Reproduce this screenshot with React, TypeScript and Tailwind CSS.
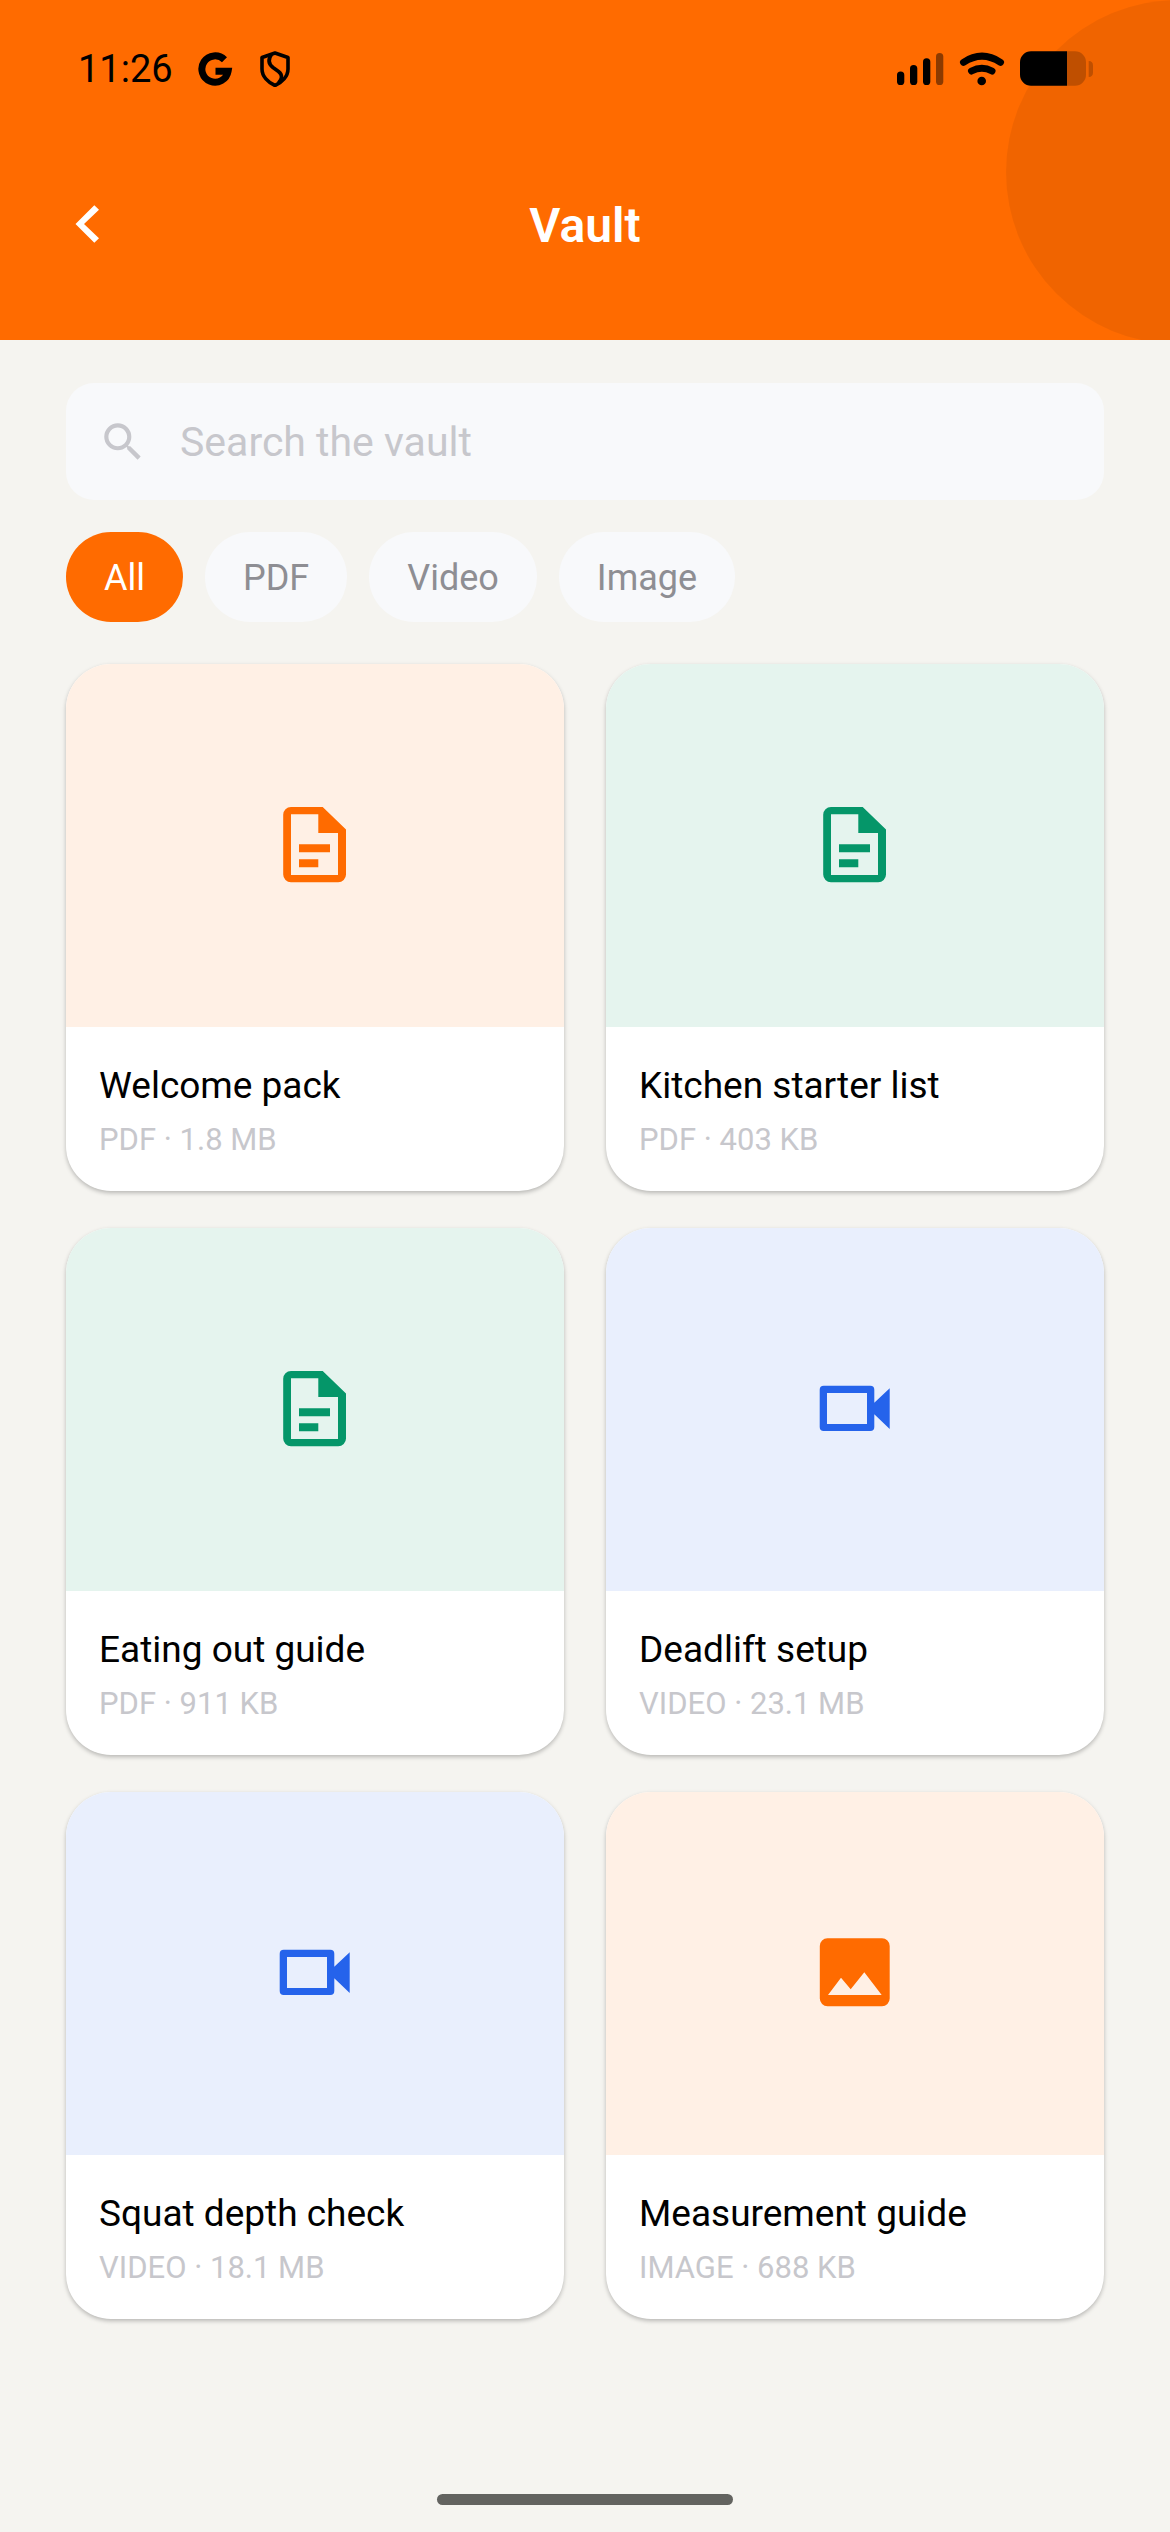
import { useState } from "react";
import { MdSearch } from "react-icons/md";

type Kind = "PDF" | "Video" | "Image";
type Tone = "orange" | "green" | "blue";

type VaultItem = {
  title: string;
  kind: Kind;
  size: string;
  tone: Tone;
};

const items: VaultItem[] = [
  { title: "Welcome pack", kind: "PDF", size: "1.8 MB", tone: "orange" },
  { title: "Kitchen starter list", kind: "PDF", size: "403 KB", tone: "green" },
  { title: "Eating out guide", kind: "PDF", size: "911 KB", tone: "green" },
  { title: "Deadlift setup", kind: "Video", size: "23.1 MB", tone: "blue" },
  { title: "Squat depth check", kind: "Video", size: "18.1 MB", tone: "blue" },
  { title: "Measurement guide", kind: "Image", size: "688 KB", tone: "orange" },
];

const filters = ["All", "PDF", "Video", "Image"] as const;
type Filter = (typeof filters)[number];

const tones: Record<Tone, string> = {
  orange: "bg-[#fff0e5] text-[#ff6b00]",
  green: "bg-[#e5f4ee] text-[#059669]",
  blue: "bg-[#e9effd] text-[#2563eb]",
};

function KindIcon({ kind }: { kind: Kind }) {
  return (
    <svg
      viewBox="0 1 90 90"
      className="size-[90px]"
      fill="currentColor"
      fillRule="evenodd"
      aria-hidden="true"
    >
      {kind === "PDF" && (
        <path d="M21 7H52.7L76 29.5V74.5a7.8 7.8 0 0 1-7.8 7.8H21a7.8 7.8 0 0 1-7.8-7.8V14.8A7.8 7.8 0 0 1 21 7ZM21 14.3V75H68V33H48.3V14.3ZM29 44.3H60V52.3H29ZM29 59.3H48.3V67.3H29Z" />
      )}
      {kind === "Video" && (
        <path d="M13.7 21.7H60.3a4 4 0 0 1 4 4V38.7L79.7 24.3V65L64.3 50.3V63a4 4 0 0 1-4 4H13.7a4 4 0 0 1-4-4V25.7a4 4 0 0 1 4-4ZM17 29V60H57V29Z" />
      )}
      {kind === "Image" && (
        <path d="M17.5 10.3H72a7.7 7.7 0 0 1 7.7 7.7V70.6a7.7 7.7 0 0 1-7.7 7.7H17.5a7.7 7.7 0 0 1-7.7-7.7V18a7.7 7.7 0 0 1 7.7-7.7ZM18 67H71.7L54.3 44.3L40.7 61.3L31 49.7Z" />
      )}
    </svg>
  );
}

function StatusBar() {
  return (
    <div className="flex h-[138px] items-center justify-between pl-[78px] pr-[76px] text-black">
      <div className="flex items-center">
        <span className="text-[38px] leading-none">11:26</span>
        <svg viewBox="0 0 36 36" className="ml-6 size-9" aria-hidden="true">
          <path
            d="M27.5 8.8A13.2 13.2 0 1 0 31.1 20.2H18.5"
            fill="none"
            stroke="currentColor"
            strokeWidth="7"
          />
        </svg>
        <svg
          viewBox="0 0 30 36"
          className="ml-[27px] h-9 w-[30px]"
          fill="none"
          stroke="currentColor"
          strokeWidth="3.6"
          strokeLinejoin="round"
          aria-hidden="true"
        >
          <path d="M15 2L28 6.5V18C28 25.5 22 31.5 15 34.5C8 31.5 2 25.5 2 18V6.5Z" />
          <path d="M11.5 3.5C7.5 9 8.5 13 13 16.5L18.5 20.5C23 24 22 28 18.5 32" />
        </svg>
      </div>
      <svg viewBox="0 0 198 38" className="h-[38px] w-[198px]" aria-hidden="true">
        <rect x="1" y="21.5" width="7.3" height="13.5" rx="3.6" />
        <rect x="14" y="15" width="7.3" height="20" rx="3.6" />
        <rect x="27" y="8.3" width="7.3" height="26.7" rx="3.6" />
        <rect x="40" y="3" width="7.3" height="32" rx="3.6" opacity="0.45" />
        <g fill="none" stroke="currentColor" strokeWidth="7" strokeLinecap="round">
          <path d="M67.5 12.3Q86 0 104.5 12.3" />
          <path d="M75.5 21Q86 15.5 96 21" />
        </g>
        <circle cx="85.7" cy="31" r="4.3" />
        <path d="M171 1.3H135A11 11 0 0 0 124 12.3V24.7A11 11 0 0 0 135 35.7H171Z" />
        <g opacity="0.2">
          <path d="M171 1.3H179A11 11 0 0 1 190 12.3V24.7A11 11 0 0 1 179 35.7H171Z" />
          <path d="M192.7 11A4.5 4.5 0 0 1 197 15.5V22.5A4.5 4.5 0 0 1 192.7 27Z" />
        </g>
      </svg>
    </div>
  );
}

function Header() {
  return (
    <header className="relative h-[340px] overflow-hidden bg-[#ff6b00]">
      <div className="absolute -right-[180px] top-0 size-[344px] rounded-full bg-black/6" />
      <div className="relative">
        <StatusBar />
        <div className="grid grid-cols-[1fr_auto_1fr] items-center px-[66px] pt-[56px] text-white">
          <button type="button" aria-label="Back" className="size-16 justify-self-start">
            <svg viewBox="0 2 64 64" className="size-16" fill="currentColor" aria-hidden="true">
              <path d="M28.3 13.2L33 17.8L18 32L33 46.2L28.3 50.7L9.5 32Z" />
            </svg>
          </button>
          <h1 className="text-[48px] font-semibold leading-[64px]">Vault</h1>
        </div>
      </div>
    </header>
  );
}

function VaultCard({ item }: { item: VaultItem }) {
  return (
    <li className="overflow-hidden rounded-[45px] bg-white shadow-[0_2px_4px_rgba(0,0,0,0.25)]">
      <div className={`flex h-[363px] items-center justify-center ${tones[item.tone]}`}>
        <KindIcon kind={item.kind} />
      </div>
      <div className="px-[33px] pb-[31px] pt-[35px]">
        <h2 className="truncate text-[37px] leading-[48px] text-black">{item.title}</h2>
        <p className="mt-[10px] text-[31px] leading-10 text-[#c7c7cc]">
          {item.kind.toUpperCase()} · {item.size}
        </p>
      </div>
    </li>
  );
}

export default function App() {
  const [query, setQuery] = useState("");
  const [filter, setFilter] = useState<Filter>("All");

  const visible = items.filter(
    (item) =>
      (filter === "All" || item.kind === filter) &&
      item.title.toLowerCase().includes(query.toLowerCase())
  );

  return (
    <div className="flex min-h-screen flex-col bg-[#f5f4f0] font-[Roboto,sans-serif]">
      <Header />
      <main className="px-[66px] pt-[43px]">
        <label className="flex h-[117px] items-center gap-8 rounded-[28px] bg-[#f8f9fb] px-8 text-[#c7c7cc]">
          <MdSearch className="size-[50px] shrink-0" aria-hidden="true" />
          <input
            type="search"
            aria-label="Search the vault"
            placeholder="Search the vault"
            value={query}
            onChange={(e) => setQuery(e.target.value)}
            className="min-w-0 flex-1 bg-transparent pt-[2px] text-[41px] text-black outline-none placeholder:text-[#c7c7cc]"
          />
        </label>

        <div className="mt-8 flex gap-[22px]">
          {filters.map((name) => (
            <button
              key={name}
              type="button"
              aria-pressed={filter === name}
              onClick={() => setFilter(name)}
              className={`h-[90px] rounded-full px-[38px] pt-[2px] text-[36px] ${
                filter === name ? "bg-[#ff6b00] text-white" : "bg-[#f8f9fb] text-[#8e8e93]"
              }`}
            >
              {name}
            </button>
          ))}
        </div>

        <ul className="mt-[42px] grid grid-cols-2 gap-x-[42px] gap-y-[37px]">
          {visible.map((item) => (
            <VaultCard key={item.title} item={item} />
          ))}
        </ul>
      </main>
      <div className="mx-auto mb-[27px] mt-auto h-[11px] w-[296px] rounded-full bg-[#636360]" />
    </div>
  );
}
